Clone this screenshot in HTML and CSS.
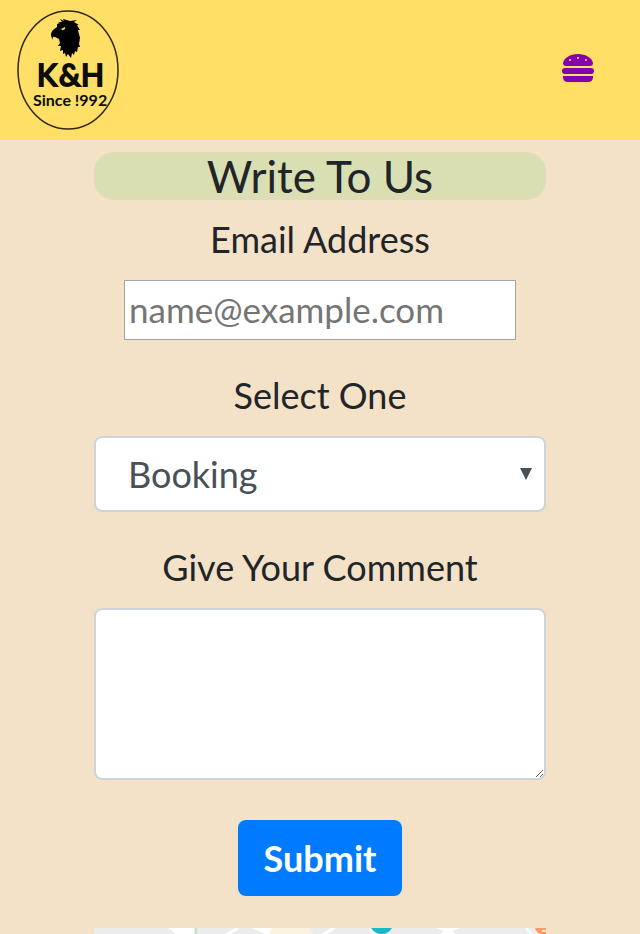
FILE: index.html
```html
<!DOCTYPE html>
<html lang="en">
<head>
<meta charset="utf-8">
<meta name="viewport" content="width=device-width, initial-scale=1">
<title>Write To Us</title>
<link rel="stylesheet" href="styles.css">
</head>
<body>
<header class="navbar">
  <a class="brand" href="#" aria-label="K&amp;H home">
    <svg class="logo" viewBox="0 0 102 120">
      <ellipse cx="51" cy="60" rx="50" ry="59" fill="none" stroke="#30280f" stroke-width="1.5"/>
      <path d="M43 9L47 11L46 9L53 11L60 10L57 12L62 15L60 15L63 20L61 20L63 28L62 34L63 37L61 37L60 42L58 41L57 45L55 43L54 48L51 44L49 47L48 43L46 44L46 40L43 41L44 36L41 36L43 33L42 29L38 27Q35 26 36 30Q32 24 36 20L40 17L40 14L43 13L41 12L45 12Z" fill="#000"/>
      <path d="M44 19L48 17Q49 20 45 20Z" fill="#ffdf66"/>
      <g class="logo-text">
        <text class="logo-name" x="20" y="76">K</text>
        <text class="logo-name" x="42" y="76">&amp;</text>
        <text class="logo-name" x="64" y="76">H</text>
        <text class="logo-since" x="16" y="96">Since !992</text>
      </g>
    </svg>
  </a>
  <button class="menu-button" type="button" aria-label="Menu">
    <svg class="burger" viewBox="0 0 32 28">
      <path d="M4 12Q1 12 1 9C2 4 8 0 16 0S30 4 31 9Q31 12 28 12Z"/>
      <rect y="14" width="32" height="6" rx="3"/>
      <path d="M1 22H31V23Q31 28 26 28H6Q1 28 1 23Z"/>
      <g fill="#ffdf66"><circle cx="8" cy="6" r="1"/><circle cx="16" cy="4" r="1"/><circle cx="24" cy="6" r="1"/></g>
    </svg>
  </button>
</header>
<main class="contact">
  <h1 class="title">Write To Us</h1>
  <form class="form">
    <div class="field">
      <label for="email">Email Address</label>
      <input class="email" id="email" type="email" placeholder="name@example.com">
    </div>
    <div class="field">
      <label for="topic">Select One</label>
      <div class="select-wrap">
        <select class="control" id="topic"><option>Booking</option></select>
        <svg class="arrow" viewBox="0 0 12 12"><path d="M0 0H12L6 12Z"/></svg>
      </div>
    </div>
    <div class="field">
      <label for="comment">Give Your Comment</label>
      <textarea class="control comment" id="comment"></textarea>
    </div>
    <button class="submit" type="submit">Submit</button>
  </form>
  <svg class="map" viewBox="0 0 452 6" preserveAspectRatio="none" role="img" aria-label="Map">
    <path fill="#ececec" d="M0 0H452V6H0Z"/>
    <path fill="#fff" d="M74 0H100V6H82ZM157 0H178L182 6H172ZM341 0H367L358 3L362 6H346L350 3Z"/>
    <path d="M102 0V6" stroke="#c3e2cd" stroke-width="2"/>
    <path fill="#faf3df" d="M179 0H215L219 6H175Z"/>
    <path d="M144 0L132 7M240 0L229 7M276 0L281 7M432 0L438 7" fill="none" stroke="#fff" stroke-width="3"/>
    <path fill="#18b8c8" d="M277 0H298Q294 6 288 6Q281 6 277 0Z"/>
    <path fill="#ff9c63" d="M441 0H452V2H448V4H452V6H446Q442 4 441 0Z"/>
  </svg>
</main>
</body>
</html>
```
FILE: styles.css
```css
* { box-sizing: border-box; }

body {
  margin: 0;
  background: #f3e1c8;
  color: #212529;
  font-family: Lato, "Open Sans", sans-serif;
  font-size: 36px;
  line-height: 54px;
}

.navbar {
  display: flex;
  align-items: center;
  justify-content: space-between;
  padding: 10px 46px 10px 17px;
  background: #ffdf66;
}

.brand { display: block; }
.logo { display: block; width: 102px; height: 120px; }
.logo-text { fill: #0c0c08; stroke: #0c0c08; }
.logo-name { font-size: 30px; stroke-width: 2px; }
.logo-since { font-size: 16px; stroke-width: 0; font-weight: 700; }

.menu-button {
  display: flex;
  margin-top: -4px;
  padding: 0;
  border: 0;
  background: none;
}
.burger { width: 32px; height: 28px; fill: #8500ae; }

.contact {
  padding: 12px 94px 0;
  text-align: center;
}

.title {
  margin: 0 0 12px;
  border-radius: 20px;
  background: #d9dfb3;
  font-size: 44px;
  font-weight: 400;
  line-height: 48px;
}

.form {
  display: flex;
  flex-direction: column;
  align-items: center;
  gap: 28px;
  margin-bottom: 32px;
}

.field {
  display: flex;
  flex-direction: column;
  align-items: center;
  gap: 14px;
  width: 100%;
}

.email {
  width: calc(100% - 60px);
  height: 60px;
  padding: 0 4px 2px;
  border: 1px solid #a5a5a5;
  background: #fff;
  color: #495057;
  font: inherit;
  font-size: 35px;
}
.email::placeholder { color: #757575; opacity: 1; }

.select-wrap { position: relative; width: 100%; }

.control {
  display: block;
  width: 100%;
  height: 76px;
  padding: 0 32px;
  border: 2px solid #ced4da;
  border-radius: 8px;
  background: #fff;
  color: #495057;
  font: inherit;
  appearance: none;
}
.comment { height: 172px; padding: 12px 24px; resize: vertical; }

.arrow {
  position: absolute;
  top: 32px;
  right: 14px;
  width: 12px;
  height: 12px;
  fill: #495057;
  pointer-events: none;
}

.submit {
  height: 76px;
  margin-top: 12px;
  padding: 0 26px;
  border: 0;
  border-radius: 8px;
  background: #007bff;
  color: #fff;
  font: inherit;
  font-weight: 700;
}

.map { display: block; width: 100%; height: 6px; }
```
